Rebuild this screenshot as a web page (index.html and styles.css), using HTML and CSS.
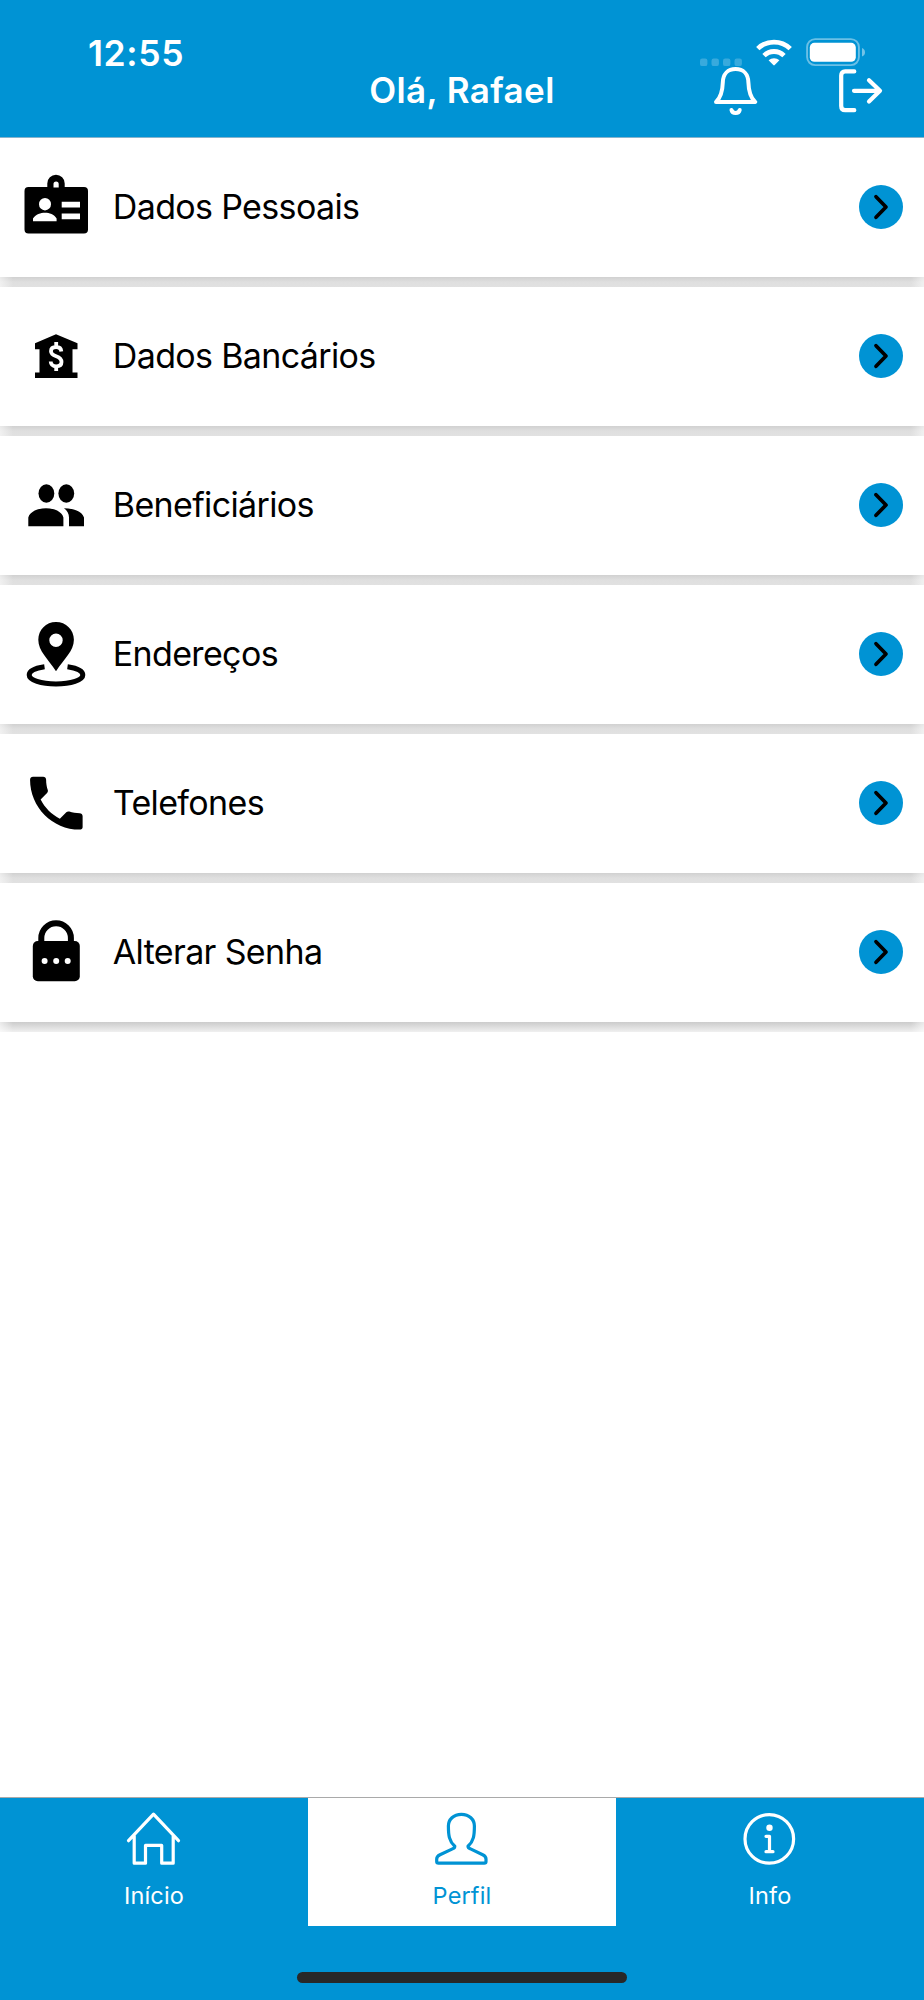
FILE: index.html
```html
<!DOCTYPE html>
<html lang="pt-BR">
<head>
<meta charset="utf-8">
<title>Perfil</title>
<link rel="stylesheet" href="styles.css">
</head>
<body>
<div class="screen">
  <header class="header">
    <div class="status">
      <span class="time">12:55</span>
      <svg class="status-icons" width="168" height="30" viewBox="0 0 168 30">
        <g fill="#fff" fill-opacity=".22"><rect x="0" y="20.5" width="7.4" height="7.6" rx="2.2"/><rect x="11.5" y="20.5" width="7.4" height="7.6" rx="2.2"/><rect x="23" y="20.5" width="7.4" height="7.6" rx="2.2"/><rect x="34.5" y="20.5" width="7.4" height="7.6" rx="2.2"/></g>
        <g fill="none" stroke="#fff" stroke-width="4.8"><path d="M57.8 10.6a23.3 23.3 0 0 1 32.4 0"/><path d="M64 17.6a14.3 14.3 0 0 1 20 0"/></g>
        <path d="M68.6 22.2a8.2 8.2 0 0 1 10.8 0L74.7 27.1q-.7.7-1.4 0z" fill="#fff"/>
        <rect x="107.1" y="1.1" width="51.8" height="26" rx="8" fill="none" stroke="#fff" stroke-opacity=".42" stroke-width="1.9"/>
        <rect x="109.8" y="4.8" width="46" height="19" rx="4.6" fill="#fff"/>
        <path d="M162 10q3 1.2 3 4.3t-3 4.3z" fill="#fff" fill-opacity=".45"/>
      </svg>
    </div>
    <div class="navbar">
      <h1 class="title">Olá, Rafael</h1>
      <div class="actions">
        <svg width="44" height="50" viewBox="0 0 44 50" fill="none" stroke="#fff" stroke-width="4" stroke-linecap="round" stroke-linejoin="round"><path d="M2 34.9C7.5 30 8.6 22.5 8.8 15.5C9 7 14 2.1 21.6 2.1S34.2 7 34.4 15.5C34.6 22.5 35.7 30 41.2 34.9Z"/><path d="M17.5 43q.7 3 4.1 3t4.1-3"/></svg>
        <svg width="44" height="46" viewBox="0 0 44 46" fill="none" stroke="#fff" stroke-width="4.2" stroke-linecap="round" stroke-linejoin="round"><path d="M15.3 4.4H6.2Q2.2 4.4 2.2 8.6V39Q2.2 43.2 6.2 43.2H15.3M15 23.8H40.5M30 13.2L41 23.8L30 34.6"/></svg>
      </div>
    </div>
  </header>

  <ul class="menu">
    <li class="item"><a class="card">
      <svg class="icon" viewBox="0 0 72 72"><path fill-rule="evenodd" d="M8.500 16H27.300V12.500a8.700 8.700 0 0 1 17.400 0V16H64q4 0 4 4V58.500q0 4-4 4H8.500q-4 0-4-4V20q0-4 4-4zM33.500 13v3.400h5.200V13a2.600 2.600 0 0 0-5.200 0zM25 27a6 6.200 0 1 0 0 12.400a6 6.200 0 1 0 0-12.400zM13 50.300H36.600V47.500C34 43 29.500 41.700 25 41.700S16 43 13 47.500zM41.700 30.800V36.500H60V30.800zM41.700 42.500V48.200H60V42.500z"/></svg>
      <span class="label">Dados Pessoais</span><svg class="go" viewBox="0 0 44 44"><path d="M17 11.700L27 22L17 32.300"/></svg></a></li>
    <li class="item"><a class="card">
      <svg class="icon" viewBox="0 0 72 72"><path d="M36 14.200L57.500 23.200V29.300H52.500V52.500H57.500V58H15V52.500H19.500V29.300H15V23.200z"/><path d="M41.300 31.500Q41 27 36.200 27Q31 27 31 31.200Q31 34.500 36.200 36.200Q41.500 38 41.500 42Q41.500 46.300 36.200 46.300Q31 46.300 30.700 41.500M36.200 22V27M36.200 46V51" fill="none" stroke="#fff" stroke-width="3.800"/></svg>
      <span class="label">Dados Bancários</span><svg class="go" viewBox="0 0 44 44"><path d="M17 11.700L27 22L17 32.300"/></svg></a></li>
    <li class="item"><a class="card">
      <svg class="icon" viewBox="0 0 72 72"><ellipse cx="26.400" cy="24.500" rx="7.900" ry="9.200"/><ellipse cx="46.300" cy="24.500" rx="7.900" ry="9.200"/><path d="M8.300 57.200V48.500C10 42.500 18 39.300 26 39.300S42 42.500 43.400 48.500V57.200zM49 57.200V48.500C49 44.500 47 41.500 44 39.300C53 39.300 62 42 64 48.500V57.200z"/></svg>
      <span class="label">Beneficiários</span><svg class="go" viewBox="0 0 44 44"><path d="M17 11.700L27 22L17 32.300"/></svg></a></li>
    <li class="item"><a class="card">
      <svg class="icon" viewBox="0 0 72 72"><path fill-rule="evenodd" d="M36 4C26 4 18.300 11.800 18.300 21.800C18.300 33 28 41 36 53.200C44 41 53.900 33 53.900 21.800C53.900 11.800 46 4 36 4zM36 15.500a6.700 6.700 0 1 1 0 13.400a6.700 6.700 0 1 1 0-13.400z"/><path d="M24.500 48.700C15 50 9.200 53 9.200 57C9.200 62 21 66 36 66S62.800 62 62.800 57C62.800 53 57 50 47.500 48.700" fill="none" stroke="#000" stroke-width="5"/></svg>
      <span class="label">Endereços</span><svg class="go" viewBox="0 0 44 44"><path d="M17 11.700L27 22L17 32.300"/></svg></a></li>
    <li class="item"><a class="card">
      <svg class="icon" viewBox="0 0 72 72"><path transform="translate(1.300 1) scale(2.920)" d="M6.540 5c.06.89.21 1.760.45 2.590L6.620 10.790c1.440 2.830 3.760 5.140 6.590 6.590l2.200-2.200c.27-.27.670-.36 1.020-.24c1.120.37 2.330.57 3.570.57c.55 0 1 .45 1 1V20.300c0 .55-.45.800-1 .800c-9.390 0-17-7.710-17-17.100c0-.55.450-1 1-1h3.500c.55 0 1 .45 1 1c0 1.250.2 2.450.57 3.570c.11.350.03.740-.25 1.020l-2.200 2.200"/></svg>
      <span class="label">Telefones</span><svg class="go" viewBox="0 0 44 44"><path d="M17 11.700L27 22L17 32.300"/></svg></a></li>
    <li class="item"><a class="card">
      <svg class="icon" viewBox="0 0 72 72"><rect x="12.800" y="25" width="47" height="40.200" rx="5"/><path d="M21.300 27V22a14.800 14.800 0 0 1 29.600 0V27" fill="none" stroke="#000" stroke-width="6"/><g fill="#fff"><circle cx="24.600" cy="45" r="3"/><circle cx="36.200" cy="45" r="3"/><circle cx="47.700" cy="45" r="3"/></g></svg>
      <span class="label">Alterar Senha</span><svg class="go" viewBox="0 0 44 44"><path d="M17 11.700L27 22L17 32.300"/></svg></a></li>
  </ul>

  <footer class="footer">
    <nav class="tabs">
      <a class="tab">
        <svg class="tab-icon" viewBox="0 0 60 60"><path d="M4.500 31.700L29.500 5.200L54.500 31.700M10.200 27V54.200H21.500V36.400H37.700V54.200H49.200V27"/></svg>
        <span class="tab-label">Início</span></a>
      <a class="tab active">
        <svg class="tab-icon" viewBox="0 0 60 60"><path d="M29.400 5.300C21.500 5.300 16.400 10.500 16.400 17C16.400 26 17 32 22.800 37.300Q22.800 39 21 39.600L8 45.700Q4.700 47.200 4.700 50V52.500Q4.700 54.200 6.500 54.200H52.200Q54 54.200 54 52.500V50Q54 47.200 50.700 45.700L38 39.600Q36 39 36 37.300C41.800 32 42.400 26 42.400 17C42.400 10.500 37.300 5.300 29.400 5.300Z"/></svg>
        <span class="tab-label">Perfil</span></a>
      <a class="tab">
        <svg class="tab-icon" viewBox="0 0 60 60"><circle cx="29.300" cy="29.900" r="24.300"/><circle cx="29.500" cy="18.700" r="3.200" fill="#fff" stroke="none"/><path d="M26 27.300H29.500V42.700M26 42.700H33"/></svg>
        <span class="tab-label">Info</span></a>
    </nav>
    <div class="home-indicator"></div>
  </footer>
</div>
</body>
</html>
```
FILE: styles.css
```css
* { box-sizing: border-box; }
body { margin: 0; background: #fff; font-family: Inter, "Liberation Sans", sans-serif; color: #000; }
svg { display: block; flex: none; }
.screen { width: 924px; height: 2000px; display: flex; flex-direction: column; overflow: hidden; }

.header { height: 138px; background: #0093d4; border-bottom: 1px solid #86b3cc; flex: none; }
.status { height: 67px; padding: 38px 56px 0 88px; display: flex; justify-content: space-between; align-items: flex-start; }
.time { color: #fff; font-size: 35.500px; font-weight: 600; line-height: 32px; letter-spacing: .600px; }
.navbar { height: 70px; padding-right: 41px; display: grid; grid-template-columns: 1fr auto 1fr; align-items: start; }
.title { grid-column: 2; margin: 0 -41px 0 0; color: #fff; font-size: 35px; font-weight: 600; line-height: 46px; letter-spacing: .400px; }
.actions { grid-column: 3; display: flex; justify-content: flex-end; gap: 81px; }

.menu { list-style: none; margin: 0; padding: 0; }
.item {
  height: 149px;
  background:
    linear-gradient(90deg, rgba(255,255,255,.55), transparent 13px, transparent calc(100% - 13px), rgba(255,255,255,.55)),
    linear-gradient(#cecece 138px, #dfdfdf 144px, #e1e1e1);
}
.item:last-child {
  background:
    linear-gradient(90deg, rgba(255,255,255,.6), transparent 13px, transparent calc(100% - 13px), rgba(255,255,255,.6)),
    linear-gradient(#c8c8c8 138px, #f0f0f0 149px);
}
.card { height: 138.500px; padding: 0 21px 0 20px; display: flex; align-items: center; background: #fff; }
.icon { width: 72px; height: 72px; fill: #000; filter: blur(.6px); }
.label { flex: 1; margin-left: 20.800px; font-size: 34px; line-height: 44px; letter-spacing: -.650px; white-space: nowrap; }
.go { width: 44px; height: 44px; border-radius: 50%; background: #0093d4; fill: none; stroke: #000; stroke-width: 3.700; stroke-linecap: round; stroke-linejoin: round; }

.footer { height: 203.500px; margin-top: auto; background: #0093d4; border-top: 1px solid #a9a9a9; display: flex; flex-direction: column; align-items: center; }
.tabs { width: 100%; height: 128.500px; display: grid; grid-template-columns: repeat(3, 1fr); }
.tab { display: flex; flex-direction: column; align-items: center; padding-top: 11.300px; color: #fff; }
.tab.active { background: #fff; color: #0093d4; }
.tab-icon { width: 60px; height: 60px; fill: none; stroke: currentColor; stroke-width: 3.200; stroke-linecap: round; stroke-linejoin: round; }
.tab-label { margin-top: 12px; font-size: 23.500px; line-height: 30px; letter-spacing: .150px; }
.home-indicator { width: 330px; height: 11px; margin-top: 45.500px; border-radius: 6px; background: #282828; }
```
